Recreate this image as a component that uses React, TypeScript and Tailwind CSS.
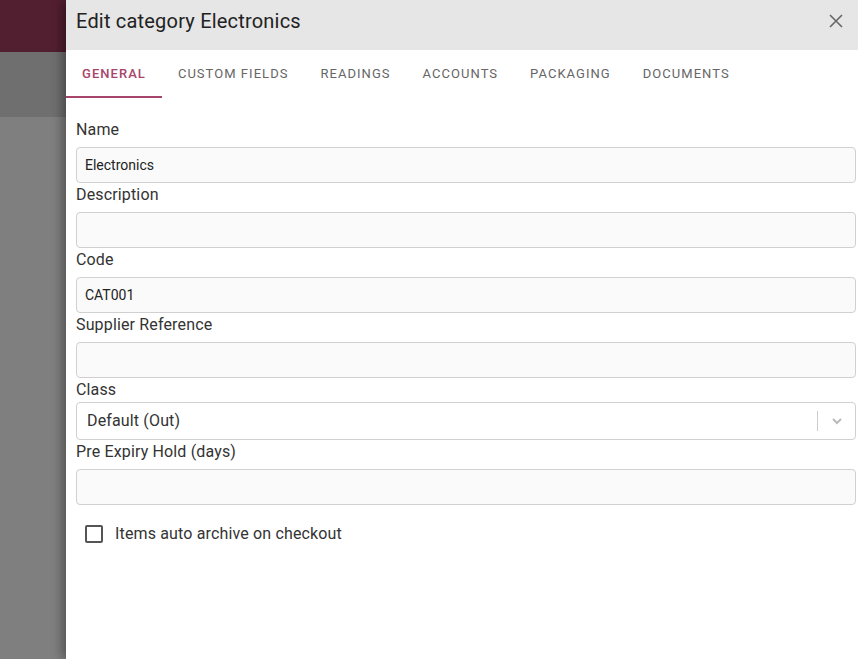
const TABS = ["General", "Custom Fields", "Readings", "Accounts", "Packaging", "Documents"];

function TextField({ label, value }: { label: string; value?: string }) {
  return (
    <div>
      <div className="mb-[5px] text-base leading-6 tracking-[0.15px] text-[#333]">{label}</div>
      <div className="flex h-9 items-center rounded border border-[#d0d0d0] bg-[#fafafa] px-2 text-sm text-[#222]">
        {value}
      </div>
    </div>
  );
}

export default function App() {
  return (
    <div className="flex h-[659px] w-[858px] overflow-hidden font-['Roboto',sans-serif]">
      {/* Dimmed page behind the drawer */}
      <div className="flex w-[66px] flex-col">
        <div className="h-[52px] bg-[#521f30]" />
        <div className="h-[65px] bg-[#6f6f6f]" />
        <div className="flex-1 bg-[#7f7f7f]" />
      </div>

      {/* Drawer */}
      <div className="relative flex flex-1 flex-col bg-white shadow-[-4px_0_10px_rgba(0,0,0,0.35)]">
        <div className="flex h-[50px] items-center justify-between bg-[#e6e6e6] pb-2 pl-[10px] pr-[14px]">
          <h1 className="text-xl tracking-[0.2px] text-[#222]">Edit category Electronics</h1>
          <button className="text-[#666]">
            <svg width="16" height="16" viewBox="0 0 16 16" fill="none" stroke="currentColor" strokeWidth="1.6">
              <path d="M2 2L14 14M14 2L2 14" />
            </svg>
          </button>
        </div>

        <div className="flex h-12">
          {TABS.map((t, i) => (
            <div
              key={t}
              className={`flex items-center px-4 text-[13px] uppercase tracking-[0.08em] ${
                i === 0 ? "border-b-2 border-[#a8456a] pt-[2px] font-medium text-[#a8456a]" : "text-[#666]"
              }`}
            >
              {t}
            </div>
          ))}
        </div>

        <div className="flex flex-col pl-[10px] pr-[2px] pt-5">
          <TextField label="Name" value="Electronics" />
          <TextField label="Description" />
          <TextField label="Code" value="CAT001" />
          <TextField label="Supplier Reference" />

          <div>
            <div className="text-base leading-6 tracking-[0.15px] text-[#333]">Class</div>
            <div className="flex h-[38px] items-center rounded border border-[#d0d0d0] bg-white">
              <span className="flex-1 pl-[10px] text-base tracking-[0.15px] text-[#333]">Default (Out)</span>
              <span className="h-5 w-px bg-[#ccc]" />
              <span className="flex w-[37px] justify-center text-[#bbb]">
                <svg width="14" height="14" viewBox="0 0 14 14" fill="none" stroke="currentColor" strokeWidth="2">
                  <path d="M3 5l4 4 4-4" />
                </svg>
              </span>
            </div>
          </div>

          <TextField label="Pre Expiry Hold (days)" />

          <label className="mt-[17px] flex items-center gap-3 pl-[9px]">
            <span className="h-[18px] w-[18px] rounded-[2px] border-2 border-[#555]" />
            <span className="text-base tracking-[0.15px] text-[#333]">Items auto archive on checkout</span>
          </label>
        </div>
      </div>
    </div>
  );
}
